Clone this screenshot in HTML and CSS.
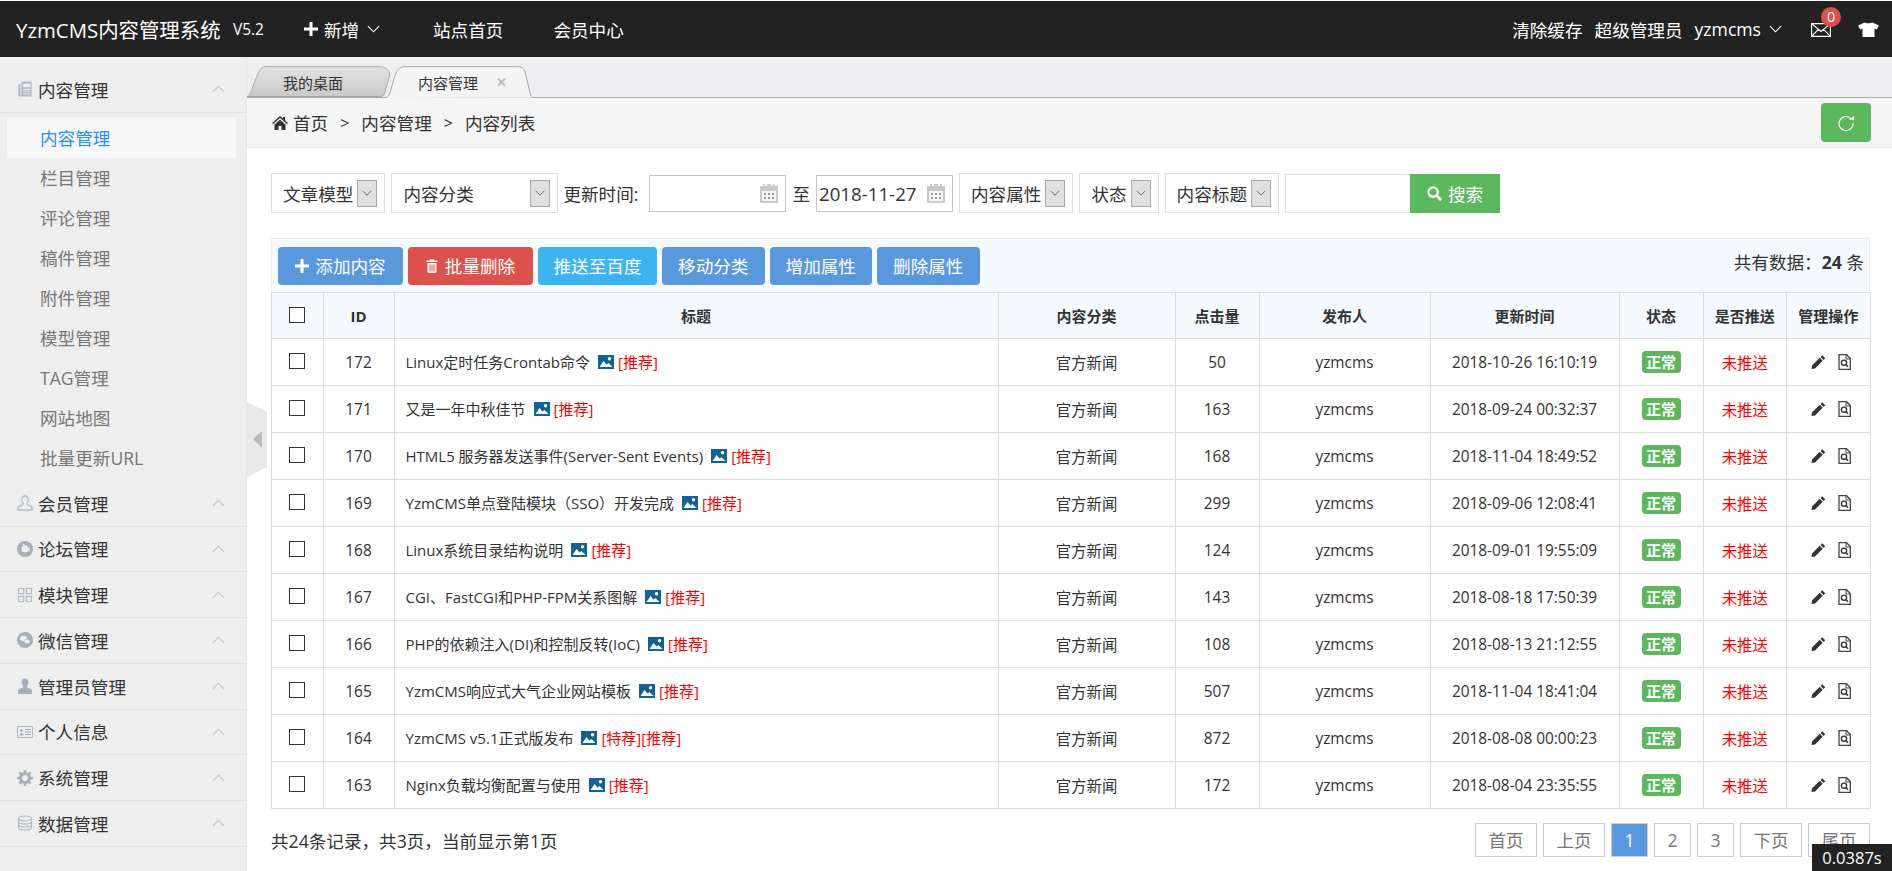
FILE: index.html
```html
<!DOCTYPE html>
<html lang="zh-CN">
<head>
<meta charset="utf-8">
<title>YzmCMS内容管理系统</title>
<link rel="stylesheet" href="styles.css">
</head>
<body>
<svg class="sprite" aria-hidden="true">
  <symbol id="chev-down" viewBox="0 0 14 8"><path d="M1 1l6 6 6-6" fill="none" stroke="currentColor" stroke-width="1.2"/></symbol>
  <symbol id="chev-up" viewBox="0 0 14 8"><path d="M1 7l6-6 6 6" fill="none" stroke="currentColor" stroke-width="1.2"/></symbol>
  <symbol id="cal" viewBox="0 0 20 20"><path d="M1 3h3V1h2v2h2V1h4v2h2V1h2v2h3v17H1z" fill="#c9c9c9"/><path d="M3 8h14v10H3z" fill="#f4f4f4"/><path d="M5 10h2v2H5zM9 10h2v2H9zM13 10h2v2h-2zM5 14h2v2H5zM9 14h2v2H9zM13 14h2v2h-2z" fill="#999"/></symbol>
  <symbol id="pic" viewBox="0 0 16 14"><path d="M0 0h16v14H0z" fill="#0f6396"/><circle cx="11.500" cy="3.800" r="1.700" fill="#fff"/><path d="M1.500 12l4-6 3 3.500 2-1.500 4 4z" fill="#fff"/></symbol>
  <symbol id="pencil" viewBox="0 0 16 16"><path d="M12 .8l3.200 3.200-1.800 1.800-3.200-3.200zM9.300 3.500l3.200 3.200-8.200 8.200L.5 15.500l.6-3.800z" fill="#333"/></symbol>
  <symbol id="docfind" viewBox="0 0 13 16"><path d="M1 .7h7.500L12.300 4.500v10.800H1z" fill="none" stroke="#444" stroke-width="1.300"/><path d="M8 1v4h4" fill="none" stroke="#444"/><circle cx="6" cy="8.700" r="2.600" fill="none" stroke="#333" stroke-width="1.400"/><path d="M8 10.700l2 2" stroke="#333" stroke-width="1.600"/></symbol>
  <symbol id="trash" viewBox="0 0 12 14"><path d="M4 1.500V.5h4v1h3.500v1.500H.5V1.500zM1.500 4h9v8.500a1.500 1.500 0 0 1-1.500 1.500H3a1.500 1.500 0 0 1-1.500-1.500zM3.500 5.500v7h1v-7zM5.500 5.500v7h1v-7zM7.500 5.500v7h1v-7z" fill="#fff" fill-rule="evenodd"/></symbol>
  <symbol id="plus" viewBox="0 0 14 14"><path d="M5.500 0h3v5.500H14v3H8.500V14h-3V8.500H0v-3h5.500z" fill="currentColor"/></symbol>
</svg>

<header class="topbar">
  <div class="brand">YzmCMS内容管理系统</div>
  <div class="version">V5.2</div>
  <div class="nav-add"><svg class="ico-plus"><use href="#plus"/></svg><span>新增</span><svg class="ico-chev"><use href="#chev-down"/></svg></div>
  <div class="nav-link">站点首页</div>
  <div class="nav-link nav-link-2">会员中心</div>
  <div class="top-right">
    <span>清除缓存</span>
    <span>超级管理员</span>
    <span class="user">yzmcms<svg class="ico-chev"><use href="#chev-down"/></svg></span>
    <span class="mail">
      <svg class="ico-mail" viewBox="0 0 20 14"><path d="M.6.6h18.800v12.800H.6zM.6.6L10 8.500 19.400.6M.6 13.400l6.800-7M19.400 13.400l-6.800-7" fill="none" stroke="#fff" stroke-width="1.200"/></svg>
      <b class="badge">0</b>
    </span>
    <svg class="ico-shirt" viewBox="0 0 21 15"><path d="M6.500.5C8 1.500 13 1.500 14.500.5L21 3.500 18.800 7.500 16.500 6.500V15h-12V6.500L2.200 7.500 0 3.500z" fill="#fff"/></svg>
  </div>
</header>

<div class="main">
  <aside class="sidebar">
    <div class="side-head"><svg class="side-ico" viewBox="0 0 16 18"><path d="M4 .5h11.500v17H2a1.500 1.500 0 0 1-1.500-1.500V3H3v13h1z" fill="#b4bac5"/><path d="M6 3h8v4H6zM6 9h8v1H6zM6 11.500h8v1H6zM6 14h8v1H6z" fill="#eee"/></svg>内容管理<svg class="side-chev"><use href="#chev-up"/></svg></div>
    <ul class="side-list">
      <li class="active">内容管理</li>
      <li>栏目管理</li>
      <li>评论管理</li>
      <li>稿件管理</li>
      <li>附件管理</li>
      <li>模型管理</li>
      <li>TAG管理</li>
      <li>网站地图</li>
      <li>批量更新URL</li>
    </ul>
    <div class="side-head"><svg class="side-ico" viewBox="0 0 16 16"><path d="M8 1c2 0 3.200 1.500 3.200 3.500S10.300 8 9.800 9c0 1 4.700 2 5.200 3.500V15H1v-2.500C1.500 11 6.200 10 6.200 9 5.700 8 4.800 6.500 4.800 4.500S6 1 8 1z" fill="none" stroke="#b4bac5" stroke-width="1.300"/></svg>会员管理<svg class="side-chev"><use href="#chev-up"/></svg></div>
    <div class="side-head"><svg class="side-ico" viewBox="0 0 16 16"><circle cx="8" cy="8" r="8" fill="#a8afbc"/><circle cx="8" cy="8" r="3.600" fill="#eee"/><path d="M5 2.500l4 2-1 3.500zM13 6l-3.500 2 3 3z" fill="#eee"/></svg>论坛管理<svg class="side-chev"><use href="#chev-up"/></svg></div>
    <div class="side-head"><svg class="side-ico" viewBox="0 0 16 16"><path d="M1.500 1.500h5.200v5.200H1.500zM9.300 1.500h5.200v5.200H9.300zM1.500 9.300h5.200v5.200H1.500zM9.300 9.300h5.200v5.200H9.300z" fill="none" stroke="#b4bac5" stroke-width="1.200"/></svg>模块管理<svg class="side-chev"><use href="#chev-up"/></svg></div>
    <div class="side-head"><svg class="side-ico" viewBox="0 0 16 16"><circle cx="8" cy="8" r="8" fill="#a8afbc"/><ellipse cx="6.500" cy="6.500" rx="3.500" ry="2.800" fill="#eee"/><ellipse cx="10" cy="9.500" rx="3" ry="2.400" fill="#eee" stroke="#a8afbc" stroke-width=".6"/></svg>微信管理<svg class="side-chev"><use href="#chev-up"/></svg></div>
    <div class="side-head"><svg class="side-ico" viewBox="0 0 16 16"><path d="M8 .5c2 0 3.300 1.500 3.300 3.700S10.200 8 9.700 9c0 .8 4.800 1.500 5.300 3.500V16H1v-3.500C1.500 10.500 6.300 9.800 6.300 9 5.800 8 4.700 6.400 4.700 4.200S6 .5 8 .5z" fill="#a8afbc"/></svg>管理员管理<svg class="side-chev"><use href="#chev-up"/></svg></div>
    <div class="side-head"><svg class="side-ico" viewBox="0 0 16 12"><path d="M.5.500h15v11H.5z" fill="none" stroke="#b4bac5"/><circle cx="4.500" cy="4.500" r="1.500" fill="#a8afbc"/><path d="M2.500 9.500c0-3 4-3 4 0zM8 3h6v1H8zM8 5.500h6v1H8zM8 8h6v1H8z" fill="#a8afbc"/></svg>个人信息<svg class="side-chev"><use href="#chev-up"/></svg></div>
    <div class="side-head"><svg class="side-ico" viewBox="0 0 16 16"><circle cx="8" cy="8" r="4.500" fill="none" stroke="#a8afbc" stroke-width="3"/><path d="M8 0v16M0 8h16M2.300 2.300l11.400 11.400M13.700 2.300L2.300 13.700" stroke="#a8afbc" stroke-width="2.500" stroke-dasharray="3 10 3"/></svg>系统管理<svg class="side-chev"><use href="#chev-up"/></svg></div>
    <div class="side-head"><svg class="side-ico" viewBox="0 0 16 16"><ellipse cx="8" cy="3.500" rx="6.500" ry="2.500" fill="none" stroke="#b4bac5" stroke-width="1.200"/><path d="M1.500 3.500v9c0 1.400 3 2.500 6.500 2.500s6.500-1.100 6.500-2.500v-9M1.500 6.500c0 1.400 3 2.500 6.500 2.500s6.500-1.100 6.500-2.500M1.500 9.500c0 1.400 3 2.500 6.500 2.500s6.500-1.100 6.500-2.500" fill="none" stroke="#b4bac5" stroke-width="1.200"/></svg>数据管理<svg class="side-chev"><use href="#chev-up"/></svg></div>
  </aside>

  <svg class="collapse" viewBox="0 0 20 75"><path d="M0 0l20 10v55L0 75z" fill="#e8e8e8"/><path d="M6 37l9-8v17z" fill="#bbb"/></svg>

  <section class="content">
    <nav class="tabs">
      <div class="tab tab-off">
        <svg class="tab-shape" viewBox="0 0 145 32"><defs><linearGradient id="tg" x1="0" y1="0" x2="0" y2="1"><stop offset="0" stop-color="#e2e2e2"/><stop offset="1" stop-color="#c9c9c9"/></linearGradient></defs><path d="M1 31C6 24 9 8 14 3 15 1 17 .7 20 .7h112c5 0 9 2 11 7L138 26c-.7 3-2 5-5 5z" fill="url(#tg)" stroke="#aaa" stroke-width="1"/><path d="M0 31h135" stroke="#aaa" stroke-width="2"/></svg>
        <span class="tab-text">我的桌面</span>
      </div>
      <div class="tab tab-on">
        <svg class="tab-shape" viewBox="0 0 150 32"><path d="M0 32C3 32 5 30 6 27L9 16C11 9 13 .7 20 .7h114c4 0 6 2 7 5l5 21c.7 3 1.500 4.800 4 5" fill="#f4f4f4" stroke="#aaa" stroke-width="1"/></svg>
        <span class="tab-text">内容管理</span><span class="tab-x">✕</span>
      </div>
    </nav>

    <div class="crumbs">
      <svg class="ico-home" viewBox="0 0 16 14"><path d="M8 0l3 2.600V1h2v3.300L16 7l-1 1L8 2 1 8 0 7zM2.500 8.500L8 3.800l5.500 4.700V14H9.500v-4h-3v4h-4z" fill="#333"/></svg>
      <span>首页</span><span class="sep">&gt;</span><span>内容管理</span><span class="sep">&gt;</span><span>内容列表</span>
      <button class="refresh" type="button"><svg viewBox="0 0 18 18"><path d="M14.500 5.200A7 7 0 1 0 16 9" fill="none" stroke="#fff" stroke-width="1.200"/><path d="M12 6h5V1.800z" fill="#fff" transform="rotate(8 15 5)"/></svg></button>
    </div>

    <div class="body">
      <form class="filters">
        <div class="sel"><span>文章模型</span><i class="sel-arrow"><svg><use href="#chev-down"/></svg></i></div>
        <div class="sel sel-wide"><span>内容分类</span><i class="sel-arrow"><svg><use href="#chev-down"/></svg></i></div>
        <span class="flabel">更新时间:</span>
        <div class="date date-a"><span></span><svg class="cal"><use href="#cal"/></svg></div>
        <span class="fto">至</span>
        <div class="date date-b"><span>2018-11-27</span><svg class="cal"><use href="#cal"/></svg></div>
        <div class="sel"><span>内容属性</span><i class="sel-arrow"><svg><use href="#chev-down"/></svg></i></div>
        <div class="sel"><span>状态</span><i class="sel-arrow"><svg><use href="#chev-down"/></svg></i></div>
        <div class="sel"><span>内容标题</span><i class="sel-arrow"><svg><use href="#chev-down"/></svg></i></div>
        <div class="searchbox"><span class="sinput"></span><span class="sbtn"><svg viewBox="0 0 16 16"><circle cx="6.500" cy="6.500" r="5" fill="none" stroke="#fff" stroke-width="2.500"/><path d="M10 10l5 5" stroke="#fff" stroke-width="3"/></svg>搜索</span></div>
      </form>

      <div class="toolbar">
        <span class="btn b-blue b-add"><svg class="ico-plus"><use href="#plus"/></svg>添加内容</span>
        <span class="btn b-red b-del"><svg class="ico-trash"><use href="#trash"/></svg>批量删除</span>
        <span class="btn b-sky b-push">推送至百度</span>
        <span class="btn b-blue b-sm">移动分类</span>
        <span class="btn b-blue b-sm">增加属性</span>
        <span class="btn b-blue b-sm">删除属性</span>
        <span class="total">共有数据：<b>24</b> 条</span>
      </div>

      <table class="list">
        <colgroup><col class="c1"><col class="c2"><col class="c3"><col class="c4"><col class="c5"><col class="c6"><col class="c7"><col class="c8"><col class="c9"><col class="c10"></colgroup>
        <thead><tr><th><i class="cb"></i></th><th>ID</th><th>标题</th><th>内容分类</th><th>点击量</th><th>发布人</th><th>更新时间</th><th>状态</th><th>是否推送</th><th>管理操作</th></tr></thead>
        <tbody>
          <tr><td><i class="cb"></i></td><td>172</td><td class="t">Linux定时任务Crontab命令<svg class="pic"><use href="#pic"/></svg><em>[推荐]</em></td><td>官方新闻</td><td>50</td><td>yzmcms</td><td>2018-10-26 16:10:19</td><td><span class="ok">正常</span></td><td class="no">未推送</td><td class="acts"><svg class="act-e"><use href="#pencil"/></svg><svg class="act-v"><use href="#docfind"/></svg></td></tr>
          <tr><td><i class="cb"></i></td><td>171</td><td class="t">又是一年中秋佳节<svg class="pic"><use href="#pic"/></svg><em>[推荐]</em></td><td>官方新闻</td><td>163</td><td>yzmcms</td><td>2018-09-24 00:32:37</td><td><span class="ok">正常</span></td><td class="no">未推送</td><td class="acts"><svg class="act-e"><use href="#pencil"/></svg><svg class="act-v"><use href="#docfind"/></svg></td></tr>
          <tr><td><i class="cb"></i></td><td>170</td><td class="t">HTML5 服务器发送事件(Server-Sent Events)<svg class="pic"><use href="#pic"/></svg><em>[推荐]</em></td><td>官方新闻</td><td>168</td><td>yzmcms</td><td>2018-11-04 18:49:52</td><td><span class="ok">正常</span></td><td class="no">未推送</td><td class="acts"><svg class="act-e"><use href="#pencil"/></svg><svg class="act-v"><use href="#docfind"/></svg></td></tr>
          <tr><td><i class="cb"></i></td><td>169</td><td class="t">YzmCMS单点登陆模块（SSO）开发完成<svg class="pic"><use href="#pic"/></svg><em>[推荐]</em></td><td>官方新闻</td><td>299</td><td>yzmcms</td><td>2018-09-06 12:08:41</td><td><span class="ok">正常</span></td><td class="no">未推送</td><td class="acts"><svg class="act-e"><use href="#pencil"/></svg><svg class="act-v"><use href="#docfind"/></svg></td></tr>
          <tr><td><i class="cb"></i></td><td>168</td><td class="t">Linux系统目录结构说明<svg class="pic"><use href="#pic"/></svg><em>[推荐]</em></td><td>官方新闻</td><td>124</td><td>yzmcms</td><td>2018-09-01 19:55:09</td><td><span class="ok">正常</span></td><td class="no">未推送</td><td class="acts"><svg class="act-e"><use href="#pencil"/></svg><svg class="act-v"><use href="#docfind"/></svg></td></tr>
          <tr><td><i class="cb"></i></td><td>167</td><td class="t">CGI、FastCGI和PHP-FPM关系图解<svg class="pic"><use href="#pic"/></svg><em>[推荐]</em></td><td>官方新闻</td><td>143</td><td>yzmcms</td><td>2018-08-18 17:50:39</td><td><span class="ok">正常</span></td><td class="no">未推送</td><td class="acts"><svg class="act-e"><use href="#pencil"/></svg><svg class="act-v"><use href="#docfind"/></svg></td></tr>
          <tr><td><i class="cb"></i></td><td>166</td><td class="t">PHP的依赖注入(DI)和控制反转(IoC)<svg class="pic"><use href="#pic"/></svg><em>[推荐]</em></td><td>官方新闻</td><td>108</td><td>yzmcms</td><td>2018-08-13 21:12:55</td><td><span class="ok">正常</span></td><td class="no">未推送</td><td class="acts"><svg class="act-e"><use href="#pencil"/></svg><svg class="act-v"><use href="#docfind"/></svg></td></tr>
          <tr><td><i class="cb"></i></td><td>165</td><td class="t">YzmCMS响应式大气企业网站模板<svg class="pic"><use href="#pic"/></svg><em>[推荐]</em></td><td>官方新闻</td><td>507</td><td>yzmcms</td><td>2018-11-04 18:41:04</td><td><span class="ok">正常</span></td><td class="no">未推送</td><td class="acts"><svg class="act-e"><use href="#pencil"/></svg><svg class="act-v"><use href="#docfind"/></svg></td></tr>
          <tr><td><i class="cb"></i></td><td>164</td><td class="t">YzmCMS v5.1正式版发布<svg class="pic"><use href="#pic"/></svg><em>[特荐][推荐]</em></td><td>官方新闻</td><td>872</td><td>yzmcms</td><td>2018-08-08 00:00:23</td><td><span class="ok">正常</span></td><td class="no">未推送</td><td class="acts"><svg class="act-e"><use href="#pencil"/></svg><svg class="act-v"><use href="#docfind"/></svg></td></tr>
          <tr><td><i class="cb"></i></td><td>163</td><td class="t">Nginx负载均衡配置与使用<svg class="pic"><use href="#pic"/></svg><em>[推荐]</em></td><td>官方新闻</td><td>172</td><td>yzmcms</td><td>2018-08-04 23:35:55</td><td><span class="ok">正常</span></td><td class="no">未推送</td><td class="acts"><svg class="act-e"><use href="#pencil"/></svg><svg class="act-v"><use href="#docfind"/></svg></td></tr>
        </tbody>
      </table>

      <div class="foot">
        <span>共24条记录，共3页，当前显示第1页</span>
        <div class="pager"><a class="pw">首页</a><a class="pw">上页</a><a class="pn cur">1</a><a class="pn">2</a><a class="pn">3</a><a class="pw">下页</a><a class="pw">尾页</a></div>
      </div>
    </div>
  </section>
</div>
<div class="timer">0.0387s</div>
</body>
</html>
```
FILE: styles.css
```css
* { box-sizing: border-box; }
html, body { margin: 0; height: 100%; overflow: hidden; }
body {
  font-family: "Open Sans", "Noto Sans CJK SC", sans-serif;
  font-size: 17.6px;
  color: #333;
  background: #fff;
  padding-top: 1px;
  display: flex;
  flex-direction: column;
}
.sprite { width: 0; height: 0; position: absolute; }
svg { display: block; flex: none; }

/* top bar */
.topbar {
  height: 56px;
  background: #222;
  color: #fff;
  display: flex;
  align-items: center;
  padding-left: 16px;
  flex: none;
  white-space: nowrap;
}
.brand { font-size: 20.4px; width: 205px; }
.version { font-size: 15.4px; margin-left: 12px; width: 31px; }
.nav-add { display: flex; align-items: center; margin-left: 40px; width: 76px; }
.ico-plus { width: 14px; height: 14px; margin-right: 6px; color: #fff; }
.ico-chev { width: 13px; height: 8px; margin-left: 8px; color: #fff; }
.nav-link { margin-left: 53px; }
.nav-link-2 { margin-left: 50px; }
.top-right { margin-left: auto; display: flex; align-items: center; gap: 12px; padding-right: 13px; }
.user { display: flex; align-items: center; }
.mail { position: relative; margin-left: 17px; margin-right: 15px; }
.ico-mail { width: 20px; height: 14px; margin-top: 2px; }
.badge {
  position: absolute; left: 10px; top: -14px;
  width: 20px; height: 20px; border-radius: 50%;
  background: #dd514c; color: #fff;
  font-weight: 400; font-size: 14.3px; line-height: 20px; text-align: center;
}
.ico-shirt { width: 21px; height: 15px; }

/* layout */
.main { flex: 1; display: flex; min-height: 0; position: relative; }
.sidebar { width: 247px; background: #eee; border-right: 1px solid #e6e6e6; padding-top: 10px; flex: none; }
.side-head {
  height: 45.75px;
  border-bottom: 1px solid #e2e2e2;
  display: flex; align-items: center;
  padding-left: 17px;
  color: #333;
}
.side-ico { width: 16px; height: 16px; margin-right: 5px; }
.side-chev { width: 13px; height: 8px; margin-left: auto; margin-right: 21px; color: #c3c3c3; }
.side-list { list-style: none; margin: 0; padding: 5px 10px 3px 7px; }
.side-list li { height: 40px; line-height: 40px; padding-left: 33px; color: #777; }
.side-list .active { background: #f9f9f9; color: #1e90ff; }
.collapse { position: absolute; left: 247px; top: 345px; width: 20px; height: 75px; }

.content { flex: 1; min-width: 0; display: flex; flex-direction: column; }

/* tabs */
.tabs {
  height: 41px; background: #eeeef0;
  border-bottom: 1px solid #aaa;
  display: flex; align-items: flex-end;
  flex: none;
}
.tab { position: relative; height: 32px; display: flex; align-items: center; font-size: 15px; margin-bottom: -1px; }
.tab-shape { position: absolute; left: 0; top: 0; width: 100%; height: 100%; }
.tab-text, .tab-x { position: relative; }
.tab-off { width: 145px; padding-left: 36px; }
.tab-on { width: 150px; padding-left: 34px; margin-left: -8px; }
.tab-x { margin-left: 18px; color: #b4bac5; font-size: 13px; font-weight: 700; }

/* breadcrumb */
.crumbs {
  height: 50px; background: #f5f5f5;
  border-bottom: 1px solid #e5e5e5;
  display: flex; align-items: center;
  padding: 0 21px 0 25px;
  flex: none;
}
.ico-home { width: 16px; height: 14px; margin-right: 5px; }
.sep { margin: 0 12px; font-size: 16px; }
.refresh {
  margin-left: auto; width: 50px; height: 39px;
  background: #5cb85c; border: 0; border-radius: 4px; padding: 0;
  display: flex; align-items: center; justify-content: center;
}
.refresh svg { width: 18px; height: 18px; }

.body { padding: 25px 22px 0 24px; }

/* filters */
.filters { display: flex; align-items: center; height: 40px; }
.sel {
  height: 40px; border: 1px solid #ddd; background: #fff;
  display: flex; align-items: center; justify-content: space-between;
  padding: 0 7px 0 11px; margin-right: 6px; gap: 4px;
}
.sel-wide { width: 167px; margin-right: 5px; }
.sel-arrow {
  width: 20px; height: 27px; background: #e0e0e0; border: 1px solid #a9a9a9;
  display: flex; align-items: center; justify-content: center; color: #555;
}
.sel-arrow svg { width: 10px; height: 6px; }
.flabel { margin-right: 11px; }
.date {
  height: 37px; border: 1px solid #c6c6c6; background: #fff;
  display: flex; align-items: center; justify-content: space-between;
  padding: 0 6px 0 2px;
  font-size: 18.7px;
}
.date-a { width: 137px; }
.date-b { width: 137px; margin-right: 6px; }
.cal { width: 20px; height: 20px; }
.fto { margin: 0 6px; }
.searchbox { display: flex; height: 39px; }
.sinput { width: 125px; border: 1px solid #ddd; border-right: 0; }
.sbtn {
  width: 90px; background: #5cb85c; color: #fff;
  display: flex; align-items: center; justify-content: center; gap: 6px;
}
.sbtn svg { width: 15px; height: 15px; }

/* toolbar */
.toolbar {
  margin-top: 25px; height: 54px;
  background: #f5fafe; border: 1px solid #e8edf2; border-bottom: 0;
  display: flex; align-items: center;
  padding: 0 0 0 6px;
  position: relative;
  color: #fff;
}
.btn { height: 38px; border-radius: 4px; display: flex; align-items: center; justify-content: center; margin-right: 5px; }
.b-blue { background: #5a98de; }
.b-red { background: #dd514c; }
.b-sky { background: #3bb4f2; }
.b-add { width: 125px; }
.b-del { width: 125px; }
.b-push { width: 119px; }
.b-sm { width: 102.5px; }
.ico-trash { width: 12px; height: 14px; margin-right: 7px; }
.total { margin-left: auto; margin-right: 5px; color: #333; align-self: flex-start; margin-top: 10px; }

/* table */
.list { width: 100%; border-collapse: collapse; table-layout: fixed; font-size: 15.4px; }
.c1 { width: 51.5px; } .c2 { width: 71px; } .c3 { width: 604px; } .c4 { width: 177px; }
.c5 { width: 84px; } .c6 { width: 171px; } .c7 { width: 189px; } .c8 { width: 84px; }
.c9 { width: 83.5px; } .c10 { width: 83.5px; }
.list th, .list td { border: 1px solid #ddd; text-align: center; padding: 0; white-space: nowrap; }
.list th { height: 46px; background: #f5fafe; font-weight: 700; font-size: 15px; }
.list td { height: 47px; }
.list td.t { text-align: left; padding: 0 0 2px 11px; font-size: 15px; }
.cb { display: block; width: 16px; height: 16px; border: 1.5px solid #333; background: #fff; margin: -2px auto 0; }
.pic { display: inline-block; width: 16px; height: 14px; margin: 0 4px 0 8px; vertical-align: -1px; }
.t em { font-style: normal; color: #f00; }
.no { color: #f00; }
.ok { display: inline-block; width: 39px; height: 22px; line-height: 22px; border-radius: 4px; background: #5cb85c; color: #fff; font-weight: 700; font-size: 15px; }
.list td.acts { padding-left: 6px; }
.act-e, .act-v { display: inline-block; height: 16px; vertical-align: middle; margin-bottom: 3px; }
.act-e { width: 15px; margin-right: 12px; }
.act-v { width: 13px; }

/* footer */
.foot { display: flex; align-items: center; justify-content: space-between; margin-top: 14px; }
.pager { display: flex; gap: 6px; }
.pager a { height: 34px; line-height: 32px; border: 1px solid #ccc; color: #777; text-align: center; }
.pw { width: 62px; }
.pn { width: 37px; }
.pager .cur { background: #5a98de; color: #fff; }

.timer {
  position: fixed; right: 0; bottom: 0; width: 80px; height: 27px;
  background: #222; color: #fff; text-align: center; line-height: 27px; font-size: 16.5px;
}
```
